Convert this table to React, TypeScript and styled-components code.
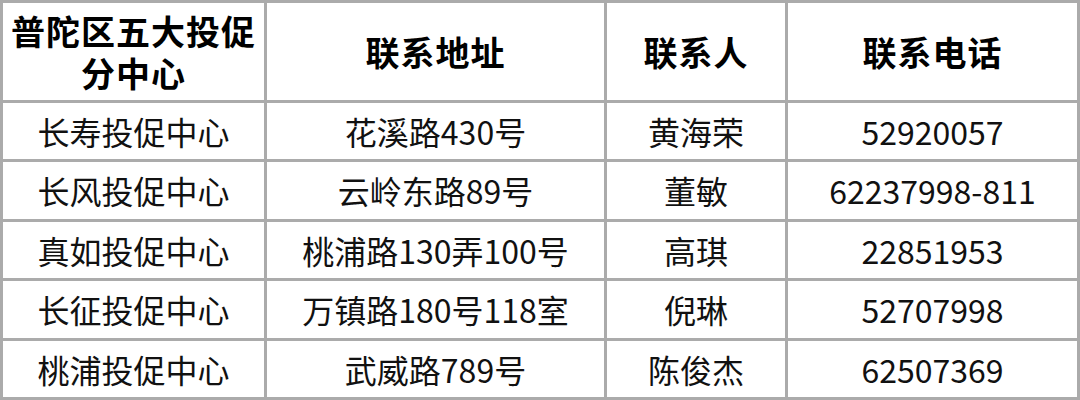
import React from 'react';
import styled, { createGlobalStyle } from 'styled-components';

interface Center {
	name: string;
	address: string;
	contact: string;
	phone: string;
}

const centers: Center[] = [
	{ name: '长寿投促中心', address: '花溪路430号', contact: '黄海荣', phone: '52920057' },
	{ name: '长风投促中心', address: '云岭东路89号', contact: '董敏', phone: '62237998-811' },
	{ name: '真如投促中心', address: '桃浦路130弄100号', contact: '高琪', phone: '22851953' },
	{ name: '长征投促中心', address: '万镇路180号118室', contact: '倪琳', phone: '52707998' },
	{ name: '桃浦投促中心', address: '武威路789号', contact: '陈俊杰', phone: '62507369' }
];

const headers = ['普陀区五大投促分中心', '联系地址', '联系人', '联系电话'];

const GlobalStyle = createGlobalStyle`
	html, body {
		margin: 0;
		padding: 0;
		background: #ffffff;
	}

	body {
		font-family: "Noto Sans CJK SC", "Noto Sans", sans-serif;
	}
`;

const Table = styled.div`
	display: grid;
	grid-template-columns: 261px 337px 178px 289px;
	grid-template-rows: 97px repeat(5, 1fr);
	gap: 3px;
	padding: 3px;
	width: 1080px;
	height: 400px;
	box-sizing: border-box;
	background: #ababab;
`;

const Cell = styled.div<{ $head?: boolean }>`
	display: flex;
	align-items: center;
	justify-content: center;
	padding: 0 8px;
	background: #ffffff;
	text-align: center;
	color: ${({ $head }) => ($head ? '#000000' : '#111111')};
	font-size: ${({ $head }) => ($head ? '34px' : '32px')};
	font-weight: ${({ $head }) => ($head ? 700 : 400)};
	line-height: ${({ $head }) => ($head ? '42px' : '1.2')};
	letter-spacing: ${({ $head }) => ($head ? '1px' : '0')};
`;

export default function App() {
	return (
		<>
			<GlobalStyle />
			<Table>
				{headers.map((h) => (
					<Cell key={h} $head>
						{h}
					</Cell>
				))}
				{centers.map((c) => (
					<React.Fragment key={c.name}>
						<Cell>{c.name}</Cell>
						<Cell>{c.address}</Cell>
						<Cell>{c.contact}</Cell>
						<Cell>{c.phone}</Cell>
					</React.Fragment>
				))}
			</Table>
		</>
	);
}
